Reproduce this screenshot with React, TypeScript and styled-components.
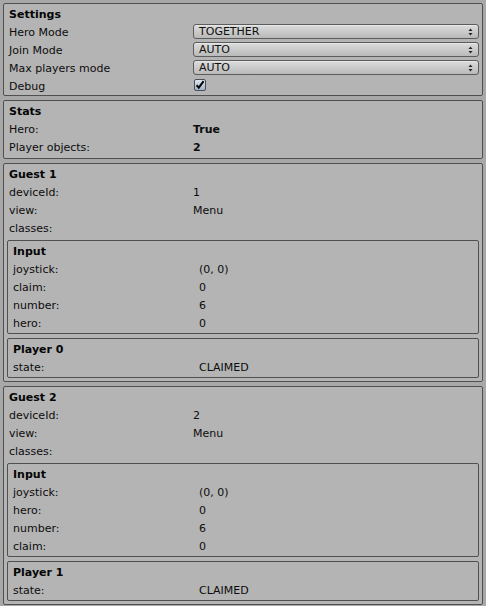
import styled, { createGlobalStyle } from "styled-components";

const GlobalStyle = createGlobalStyle`
  html, body {
    margin: 0;
    padding: 0;
    background: #a8a8a8;
  }
  body {
    font-family: "DejaVu Sans", "Liberation Sans", sans-serif;
    font-size: 11px;
    color: #0c0c0c;
  }
`;

type Field = { label: string; value?: string; bold?: boolean };

interface GuestData {
  name: string;
  deviceId: string;
  view: string;
  input: Field[];
  player: string;
}

const guests: GuestData[] = [
  {
    name: "Guest 1",
    deviceId: "1",
    view: "Menu",
    input: [
      { label: "joystick:", value: "(0, 0)" },
      { label: "claim:", value: "0" },
      { label: "number:", value: "6" },
      { label: "hero:", value: "0" },
    ],
    player: "Player 0",
  },
  {
    name: "Guest 2",
    deviceId: "2",
    view: "Menu",
    input: [
      { label: "joystick:", value: "(0, 0)" },
      { label: "hero:", value: "0" },
      { label: "number:", value: "6" },
      { label: "claim:", value: "0" },
    ],
    player: "Player 1",
  },
];

function PopupArrows() {
  return (
    <svg width="5" height="8" viewBox="0 0 5 8">
      <polygon points="0.5,3 2.5,0.5 4.5,3" fill="#222" />
      <polygon points="0.5,5 2.5,7.5 4.5,5" fill="#222" />
    </svg>
  );
}

function CheckBox() {
  return (
    <svg width="12" height="12" viewBox="0 0 12 12">
      <defs>
        <linearGradient id="cb" x1="0" y1="0" x2="0" y2="1">
          <stop offset="0" stopColor="#e2e8f0" />
          <stop offset="1" stopColor="#9fb0c6" />
        </linearGradient>
      </defs>
      <rect x="0.5" y="0.5" width="11" height="11" rx="1.5" fill="url(#cb)" stroke="#4b4f57" />
      <path d="M2.6 6.2 L4.8 8.6 L9.6 2.2" fill="none" stroke="#050505" strokeWidth="2" strokeLinejoin="miter" />
    </svg>
  );
}

function Popup({ value }: { value: string }) {
  return (
    <PopupButton>
      <span>{value}</span>
      <PopupArrows />
    </PopupButton>
  );
}

function FieldRow({ field, labelWidth }: { field: Field; labelWidth: number }) {
  return (
    <Row $labelWidth={labelWidth}>
      <Label>{field.label}</Label>
      <Value $bold={field.bold}>{field.value}</Value>
    </Row>
  );
}

function Guest({ guest }: { guest: GuestData }) {
  return (
    <Box $pb={3}>
      <Title>{guest.name}</Title>
      <FieldRow labelWidth={184} field={{ label: "deviceId:", value: guest.deviceId }} />
      <FieldRow labelWidth={184} field={{ label: "view:", value: guest.view }} />
      <FieldRow labelWidth={184} field={{ label: "classes:" }} />
      <Box $pb={1} $mt={3}>
        <Title>Input</Title>
        {guest.input.map((f) => (
          <FieldRow key={f.label} labelWidth={186} field={f} />
        ))}
      </Box>
      <Box $pb={1} $mt={4}>
        <Title>{guest.player}</Title>
        <FieldRow labelWidth={186} field={{ label: "state:", value: "CLAIMED" }} />
      </Box>
    </Box>
  );
}

export default function App() {
  return (
    <>
      <GlobalStyle />
      <Page>
        <Box $pb={0}>
          <Title>Settings</Title>
          <Row $labelWidth={184}>
            <Label>Hero Mode</Label>
            <Popup value="TOGETHER" />
          </Row>
          <Row $labelWidth={184}>
            <Label>Join Mode</Label>
            <Popup value="AUTO" />
          </Row>
          <Row $labelWidth={184}>
            <Label>Max players mode</Label>
            <Popup value="AUTO" />
          </Row>
          <Row $labelWidth={184}>
            <Label>Debug</Label>
            <CheckCell>
              <CheckBox />
            </CheckCell>
          </Row>
        </Box>

        <Box $pb={2}>
          <Title>Stats</Title>
          <FieldRow labelWidth={184} field={{ label: "Hero:", value: "True", bold: true }} />
          <FieldRow labelWidth={184} field={{ label: "Player objects:", value: "2", bold: true }} />
        </Box>

        {guests.map((g) => (
          <Guest key={g.name} guest={g} />
        ))}
      </Page>
    </>
  );
}

const Page = styled.div`
  display: flex;
  flex-direction: column;
  gap: 4px;
  padding: 3px;
  width: 486px;
  box-sizing: border-box;
`;

const Box = styled.div<{ $pb: number; $mt?: number }>`
  display: flex;
  flex-direction: column;
  background: #b4b4b4;
  border: 1px solid #505050;
  border-radius: 2px;
  padding: 1px 3px ${({ $pb }) => $pb}px 3px;
  margin-top: ${({ $mt }) => $mt ?? 0}px;
`;

const Title = styled.div`
  box-sizing: border-box;
  height: 18px;
  padding: 2px 0 0 2px;
  line-height: 16px;
  font-weight: bold;
  color: #050505;
`;

const Row = styled.div<{ $labelWidth: number }>`
  display: grid;
  grid-template-columns: ${({ $labelWidth }) => $labelWidth}px 1fr;
  align-items: start;
  height: 18px;
  padding-left: 2px;
`;

const Label = styled.span`
  white-space: nowrap;
  padding-top: 2px;
  line-height: 16px;
`;

const Value = styled.span<{ $bold?: boolean }>`
  white-space: nowrap;
  padding-top: 2px;
  line-height: 16px;
  font-weight: ${({ $bold }) => ($bold ? "bold" : "normal")};
`;

const PopupButton = styled.div`
  display: flex;
  align-items: center;
  justify-content: space-between;
  height: 15px;
  box-sizing: border-box;
  padding: 0 5px;
  margin-top: 1px;
  border: 1px solid #5c5c5c;
  border-radius: 3px;
  background: linear-gradient(to bottom, #dcdcdc 0%, #cbcbcb 50%, #b9b9b9 100%);
  box-shadow: inset 0 1px 0 rgba(255, 255, 255, 0.35);
  line-height: 13px;
  color: #101010;
`;

const CheckCell = styled.div`
  display: flex;
  padding: 2px 0 0 1px;
`;
